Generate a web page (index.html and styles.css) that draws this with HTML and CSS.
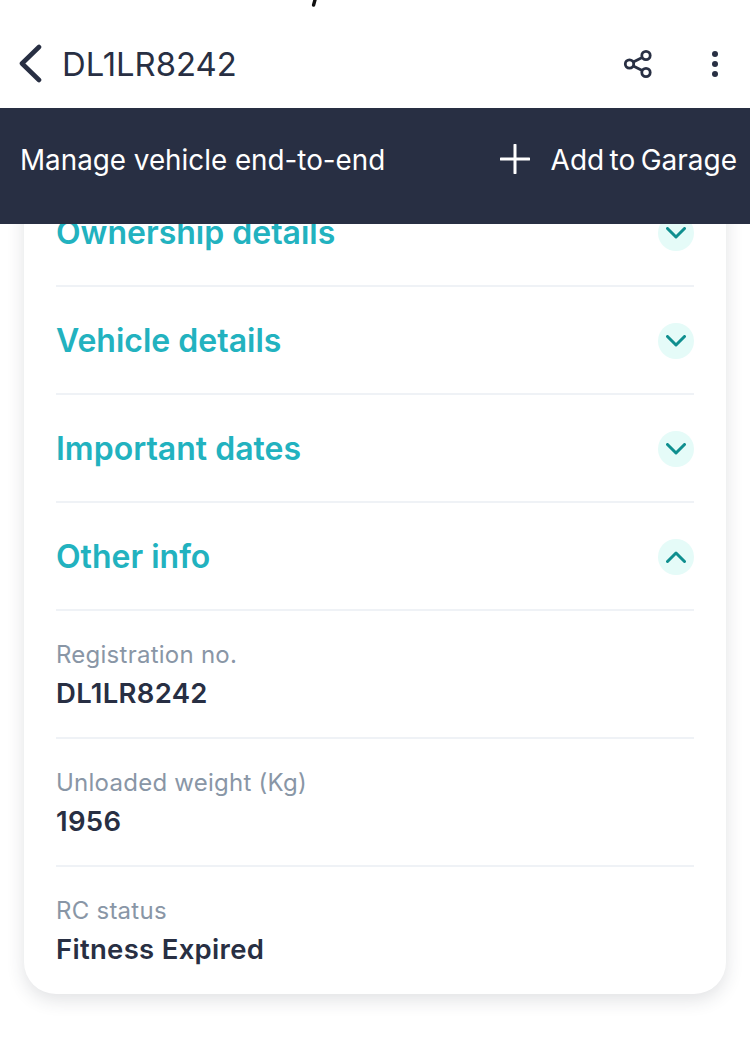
FILE: index.html
```html
<!DOCTYPE html>
<html lang="en">
<head>
    <meta charset="UTF-8">
    <meta name="viewport" content="width=device-width, initial-scale=1.0">
    <title>DL1LR8242</title>
    <link rel="stylesheet" href="styles.css">
</head>
<body>
    <div class="statusbar">
        <svg class="sliver" width="10" height="8" viewBox="0 0 10 8"><path d="M5.5 -2 L3.6 5" /></svg>
    </div>

    <header class="topbar">
        <svg class="back" width="28" height="40" viewBox="0 0 28 40"><path d="M25 3 L8 19.5 L25 36" /></svg>
        <span class="plate">DL1LR8242</span>
        <svg class="share" width="32" height="32" viewBox="0 0 32 32">
            <circle cx="7.5" cy="16" r="4.2" />
            <circle cx="24" cy="7.5" r="4.2" />
            <circle cx="24" cy="24.5" r="4.2" />
            <path d="M11.3 14 L20.2 9.5 M11.3 18 L20.2 22.5" />
        </svg>
        <div class="more"><i></i><i></i><i></i></div>
    </header>

    <div class="banner">
        <span class="banner-text">Manage vehicle end-to-end</span>
        <button class="addbtn" type="button">
            <svg width="30" height="30" viewBox="0 0 30 30"><path d="M15 1 V29 M1 15 H29" /></svg>
            Add to Garage
        </button>
    </div>

    <main class="scroller">
        <section class="card">
            <div class="section">
                <h2>Ownership details</h2>
                <span class="toggle"><svg width="20" height="12" viewBox="0 0 20 12"><path d="M1.5 1.5 L10 10 L18.5 1.5" /></svg></span>
            </div>
            <div class="section">
                <h2>Vehicle details</h2>
                <span class="toggle"><svg width="20" height="12" viewBox="0 0 20 12"><path d="M1.5 1.5 L10 10 L18.5 1.5" /></svg></span>
            </div>
            <div class="section">
                <h2>Important dates</h2>
                <span class="toggle"><svg width="20" height="12" viewBox="0 0 20 12"><path d="M1.5 1.5 L10 10 L18.5 1.5" /></svg></span>
            </div>
            <div class="section">
                <h2>Other info</h2>
                <span class="toggle"><svg width="20" height="12" viewBox="0 0 20 12"><path d="M1.5 10.5 L10 2 L18.5 10.5" /></svg></span>
            </div>
            <div class="info">
                <div class="label">Registration no.</div>
                <div class="value">DL1LR8242</div>
            </div>
            <div class="info">
                <div class="label">Unloaded weight (Kg)</div>
                <div class="value">1956</div>
            </div>
            <div class="info">
                <div class="label">RC status</div>
                <div class="value">Fitness Expired</div>
            </div>
        </section>
    </main>
</body>
</html>
```

FILE: styles.css
```css
*{
    box-sizing: border-box;
    margin: 0;
}
body{
    width: 750px;
    height: 1058px;
    overflow: hidden;
    background-color: white;
    font-family: Inter, "Noto Sans", sans-serif;
    color: #282f43;
    display: flex;
    flex-direction: column;
}
svg{
    display: block;
    fill: none;
}
.statusbar{
    height: 8px;
    padding-left: 310px;
}
.sliver path{
    stroke: #111;
    stroke-width: 3.4;
    stroke-linecap: round;
}
.topbar{
    height: 100px;
    display: flex;
    align-items: center;
    padding: 12px 19px 0 14px;
}
.back path{
    stroke: #282f43;
    stroke-width: 4.6;
    stroke-linecap: round;
    stroke-linejoin: round;
}
.plate{
    font-size: 32.8px;
    margin-left: 20px;
    flex: 1;
}
.share{
    margin-right: -2px;
}
.share circle,.share path{
    stroke: #282f43;
    stroke-width: 2.8;
}
.more{
    width: 32px;
    margin-left: 47px;
    display: flex;
    flex-direction: column;
    align-items: center;
    gap: 4px;
}
.more i{
    width: 6px;
    height: 6px;
    border-radius: 50%;
    background-color: #282f43;
}
.banner{
    height: 116px;
    background-color: #282f43;
    color: white;
    display: flex;
    align-items: center;
    justify-content: space-between;
    padding: 0 13px 12px 20px;
    font-size: 27.8px;
    position: relative;
    z-index: 1;
}
.addbtn{
    display: flex;
    align-items: center;
    gap: 21px;
    background: transparent;
    border: none;
    padding: 0;
    color: white;
    font: inherit;
    font-size: 28px;
    word-spacing: -2.5px;
}
.addbtn svg{
    margin-top: -3px;
    margin-left: -1px;
}
.addbtn path{
    stroke: white;
    stroke-width: 3;
    stroke-linecap: round;
}
.scroller{
    flex: 1;
    overflow: hidden;
    padding: 0 24px;
}
.card{
    margin-top: -45px;
    background-color: white;
    border-radius: 32px;
    padding: 0 32px;
    box-shadow: 0 6px 18px rgba(40, 47, 67, 0.14);
}
.section{
    height: 108px;
    display: flex;
    align-items: center;
    justify-content: space-between;
    border-bottom: 2px solid #eff2f6;
}
.section h2{
    font-size: 32px;
    font-weight: 600;
    color: #22b2bf;
}
.toggle{
    width: 36px;
    height: 36px;
    margin-top: 2px;
    border-radius: 50%;
    background-color: #e5fbf8;
    display: flex;
    align-items: center;
    justify-content: center;
}
.toggle path{
    stroke: #0f8f8f;
    stroke-width: 3;
    stroke-linecap: round;
    stroke-linejoin: round;
}
.info{
    height: 128px;
    padding-top: 29px;
    border-bottom: 2px solid #eff2f6;
}
.info:last-child{
    height: 127px;
    border-bottom: none;
}
.label{
    font-size: 24px;
    line-height: 30px;
    color: #8996a6;
    letter-spacing: 0.25px;
}
.value{
    font-size: 27.5px;
    line-height: 36px;
    font-weight: 600;
    margin-top: 5px;
    color: #282f43;
    letter-spacing: 0.3px;
}
```
